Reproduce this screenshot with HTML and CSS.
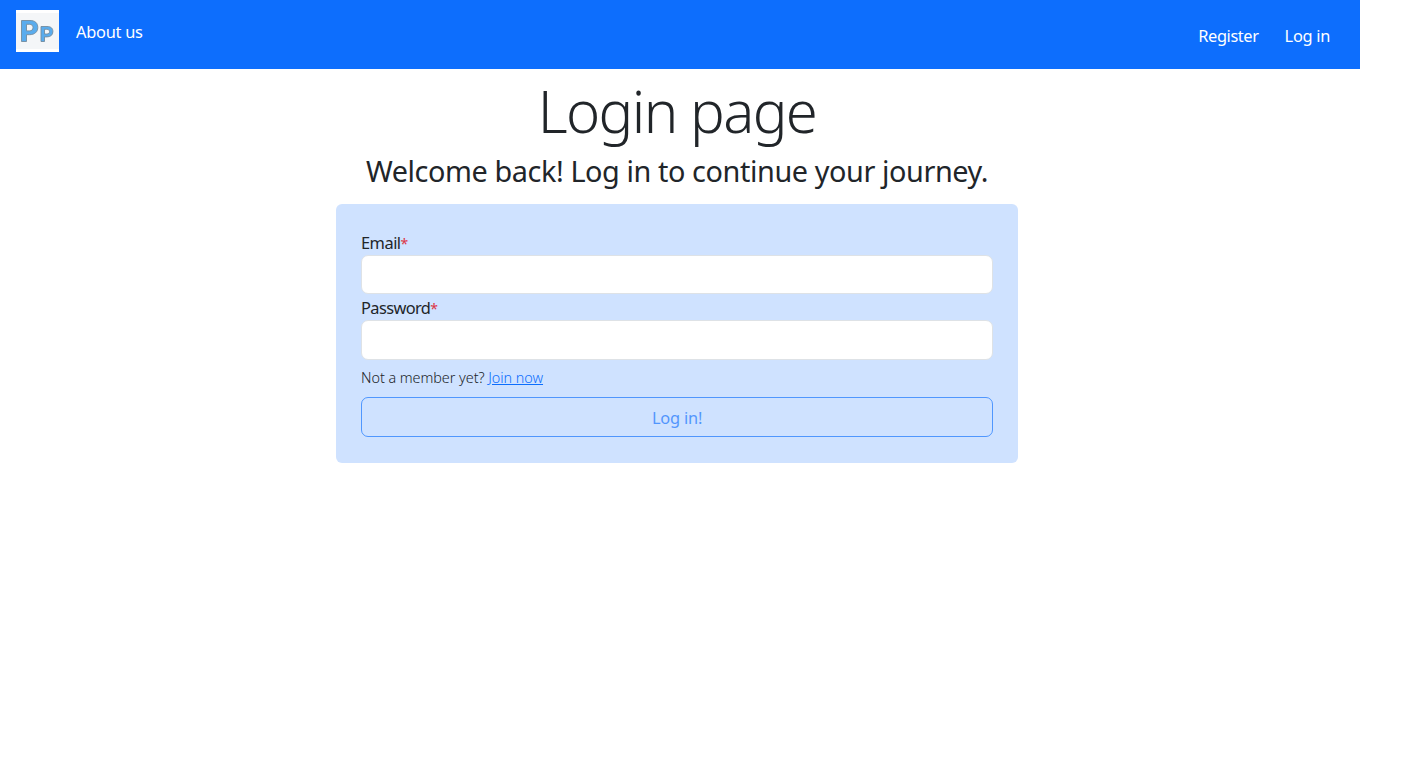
FILE: index.html
```html
<!DOCTYPE html>
<html lang="en">
<head>
<meta charset="utf-8">
<title>Login page</title>
<link rel="stylesheet" href="styles.css">
</head>
<body>
<nav class="navbar">
  <a class="brand" href="#" aria-label="Home">
    <svg class="logo" width="43" height="42" viewBox="0 0 43 42">
      <rect width="43" height="42" fill="#fff"/>
      <rect y="3" width="43" height="36" fill="#f4f6f8"/>
      <g fill="#5aaced" stroke="#738b9e" stroke-width=".9" fill-rule="evenodd">
        <path d="M5.500 10.500H14C19 10.500 21.800 13 21.800 17.500C21.800 22 18.500 24.700 13.500 24.700H10.500V31.500H5.500ZM10.500 14.300V20.900H13.300C15.700 20.900 17 19.700 17 17.600C17 15.400 15.700 14.300 13.300 14.300Z"/>
        <path d="M25 16.500H31C35 16.500 36.900 18.400 36.900 21.500C36.900 25 34.500 26.900 31 26.900H28.500V31.500H25ZM28.500 19.300V24H30.700C32.500 24 33.500 23.200 33.500 21.600C33.500 20.100 32.500 19.300 30.700 19.300Z"/>
      </g>
    </svg>
  </a>
  <a class="nav-link about" href="#">About us</a>
  <div class="account">
    <a class="nav-link register" href="#">Register</a>
    <a class="nav-link login" href="#">Log in</a>
  </div>
</nav>
<main class="page">
  <h1 class="title">Login page</h1>
  <h2 class="subtitle">Welcome back! Log in to continue your journey.</h2>
  <form class="card">
    <label class="label" for="email"><span class="email-text">Email</span><span class="required">*</span></label>
    <input class="field" id="email" type="email">
    <label class="label" for="password"><span class="password-text">Password</span><span class="required">*</span></label>
    <input class="field field-password" id="password" type="password">
    <p class="hint"><span class="question">Not a member yet?</span> <a class="join" href="#">Join now</a></p>
    <button class="submit" type="button" disabled>Log in!</button>
  </form>
</main>
</body>
</html>
```
FILE: styles.css
```css
* { box-sizing: border-box; }
body {
  margin: 0;
  background: #fff;
  color: #212529;
  font: 400 16.4px/25px "Noto Sans", "Open Sans", sans-serif;
}
.navbar {
  display: flex;
  align-items: flex-start;
  width: 1360px;
  height: 69px;
  padding: 10px 30px 0 16px;
  background: #0d6efd;
}
.brand { display: block; height: 42px; }
.logo { display: block; }
.nav-link { color: #fff; text-decoration: none; white-space: nowrap; }
.about { margin: 9px 0 0 17px; letter-spacing: -0.27px; }
.account { display: flex; gap: 26px; margin: 13px 0 0 auto; }
.register { letter-spacing: -0.4px; }
.login { letter-spacing: -0.3px; }
.page {
  display: flex;
  flex-direction: column;
  align-items: center;
  width: 1354px;
  padding-top: 6px;
}
.title { margin: 0; font-size: 58px; font-weight: 300; line-height: 72px; letter-spacing: -1.6px; white-space: nowrap; }
.subtitle { margin: 6px 0 15px; font-size: 28.8px; font-weight: 400; line-height: 36px; letter-spacing: -0.4px; white-space: nowrap; }
.card {
  display: flex;
  flex-direction: column;
  width: 682px;
  height: 259px;
  padding: 26px 25px 0;
  border-radius: 6px;
  background: #cfe2ff;
}
.label { height: 25px; }
.email-text { letter-spacing: -0.5px; }
.password-text { letter-spacing: -0.6px; }
.required { color: #dc3545; font-size: 14px; line-height: 1; }
.field {
  width: 632px;
  height: 39px;
  margin: 0 0 1px;
  padding: 6px 12px;
  border: 1px solid #dee2e6;
  border-radius: 7px;
  background: #fff;
  font: inherit;
}
.field-password { height: 40px; margin: 0; }
.hint { margin: 5px 0 7px; font-size: 14.4px; font-weight: 300; letter-spacing: -0.05px; white-space: nowrap; }
.join { color: #0d6efd; }
.submit {
  height: 40px;
  padding: 0;
  border: 1px solid #0d6efd;
  border-radius: 7px;
  background: transparent;
  color: #0d6efd;
  font: inherit;
  letter-spacing: -0.2px;
  opacity: .65;
}
```
